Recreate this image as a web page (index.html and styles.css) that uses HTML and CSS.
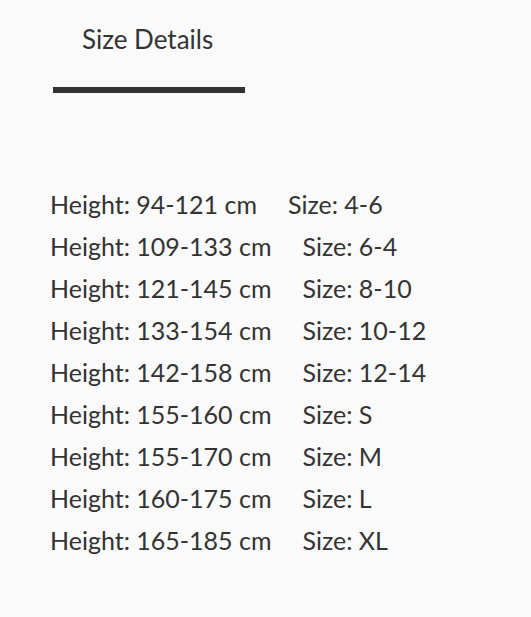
FILE: index.html
```html
<!DOCTYPE html>
<html lang="en">
<head>
    <meta charset="UTF-8">
    <meta name="viewport" content="width=device-width, initial-scale=1.0">
    <title>Size Details</title>
    <link rel="stylesheet" href="styles.css">
</head>
<body>
    <div class="tabs">
        <div class="tab active">Size Details</div>
    </div>

    <div class="sizes">
        <p>Height: 94-121 cm<span class="size">Size: 4-6</span></p>
        <p>Height: 109-133 cm<span class="size">Size: 6-4</span></p>
        <p>Height: 121-145 cm<span class="size">Size: 8-10</span></p>
        <p>Height: 133-154 cm<span class="size">Size: 10-12</span></p>
        <p>Height: 142-158 cm<span class="size">Size: 12-14</span></p>
        <p>Height: 155-160 cm<span class="size">Size: S</span></p>
        <p>Height: 155-170 cm<span class="size">Size: M</span></p>
        <p>Height: 160-175 cm<span class="size">Size: L</span></p>
        <p>Height: 165-185 cm<span class="size">Size: XL</span></p>
    </div>
</body>
</html>
```

FILE: styles.css
```css
body {
    font-family: Lato, "Open Sans", sans-serif;
    margin: 0;
    padding: 0;
    background-color: #fafafa;
    color: #333;
}
.tabs {
    display: flex;
    padding: 20px 0 0 53px;
}
.tab {
    width: 192px;
    box-sizing: border-box;
    padding: 4px 0 33px 29px;
    font-size: 26px;
    line-height: 30px;
    border-bottom: 6px solid #333;
}
.sizes {
    padding: 90px 0 0 50px;
}
.sizes p {
    margin: 0;
    font-size: 25px;
    line-height: 42px;
}
.size {
    margin-left: 31px;
}
```
